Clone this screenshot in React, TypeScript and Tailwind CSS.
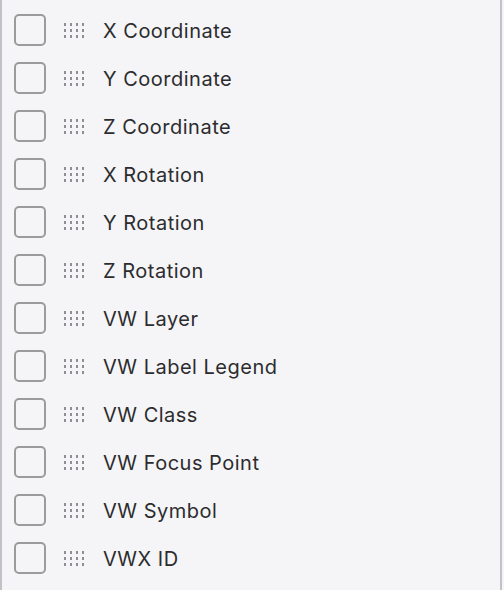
// ============================================
// COMPONENT: FIELD LIST
// ============================================

const FIELDS = [
  'X Coordinate',
  'Y Coordinate',
  'Z Coordinate',
  'X Rotation',
  'Y Rotation',
  'Z Rotation',
  'VW Layer',
  'VW Label Legend',
  'VW Class',
  'VW Focus Point',
  'VW Symbol',
  'VWX ID',
]

function GripIcon() {
  const cols = [0, 6, 12, 18]
  const rows = [0, 6, 12]
  return (
    <svg width="20" height="15" viewBox="0 0 20 15" className="shrink-0">
      {cols.map((x) =>
        rows.map((y) => (
          <rect key={`${x}-${y}`} x={x} y={y} width="2" height="3" fill="#8e8e93" />
        ))
      )}
    </svg>
  )
}

function FieldRow({ label }: { label: string }) {
  return (
    <div className="flex h-12 items-center">
      <div className="ml-3 h-8 w-8 shrink-0 rounded-[5px] border-2 border-[#9b9b9b] bg-[#f5f5f7]" />
      <div className="ml-[18px] pt-[1px]">
        <GripIcon />
      </div>
      <span className="ml-[19px] pt-[2px] text-[20px] tracking-[0.5px] text-[#2c2c2e]">{label}</span>
    </div>
  )
}

export default function App() {
  return (
    <div
      className="h-[590px] w-[504px] bg-[#f5f5f7]"
      style={{ fontFamily: 'Inter, "Liberation Sans", sans-serif' }}
    >
      <div className="h-full w-[502px] border-x-2 border-[#c2c1c8] pt-[6px]">
        {FIELDS.map((f) => (
          <FieldRow key={f} label={f} />
        ))}
      </div>
    </div>
  )
}
